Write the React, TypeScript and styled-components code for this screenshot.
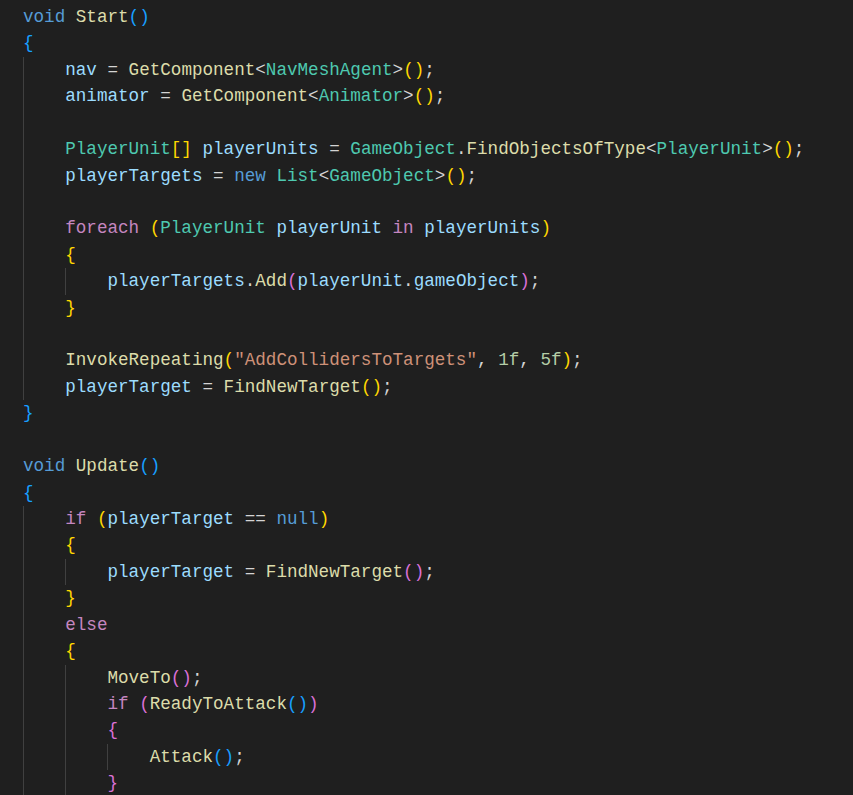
import React from "react";
import styled, { createGlobalStyle } from "styled-components";

type Kind = "k" | "c" | "t" | "v" | "f" | "s" | "n" | "p" | "b1" | "b2" | "b3";

type Token = [Kind, string];

interface CodeLine {
  depth: number;
  tokens: Token[];
}

const colors: Record<Kind, string> = {
  k: "#569cd6",
  c: "#c586c0",
  t: "#4ec9b0",
  v: "#9cdcfe",
  f: "#dcdcaa",
  s: "#ce9178",
  n: "#b5cea8",
  p: "#d4d4d4",
  b1: "#ffd700",
  b2: "#da70d6",
  b3: "#179fff",
};

const GlobalStyle = createGlobalStyle`
  html, body {
    margin: 0;
    padding: 0;
    background: #1f1f1f;
  }
`;

const Editor = styled.div`
  min-height: 100vh;
  box-sizing: border-box;
  padding: 4px 0 0 23px;
  background: #1f1f1f;
  font-family: "Liberation Mono", "DejaVu Sans Mono", monospace;
  font-size: 17.6px;
  overflow: hidden;
`;

const Row = styled.div`
  display: flex;
  height: 26.43px;
  line-height: 26.43px;
  white-space: pre;
`;

const Indent = styled.span`
  flex: none;
  width: 4ch;
  box-sizing: border-box;
  border-left: 1px solid #404040;
`;

const Tok = styled.span<{ $kind: Kind }>`
  color: ${({ $kind }) => colors[$kind]};
`;

const L = (depth: number, ...tokens: Token[]): CodeLine => ({ depth, tokens });

const lines: CodeLine[] = [
  L(0, ["k", "void"], ["p", " "], ["f", "Start"], ["b3", "()"]),
  L(0, ["b3", "{"]),
  L(1, ["v", "nav"], ["p", " = "], ["f", "GetComponent"], ["p", "<"], ["t", "NavMeshAgent"], ["p", ">"], ["b1", "()"], ["p", ";"]),
  L(1, ["v", "animator"], ["p", " = "], ["f", "GetComponent"], ["p", "<"], ["t", "Animator"], ["p", ">"], ["b1", "()"], ["p", ";"]),
  L(1),
  L(
    1,
    ["t", "PlayerUnit"],
    ["b1", "[]"],
    ["p", " "],
    ["v", "playerUnits"],
    ["p", " = "],
    ["t", "GameObject"],
    ["p", "."],
    ["f", "FindObjectsOfType"],
    ["p", "<"],
    ["t", "PlayerUnit"],
    ["p", ">"],
    ["b1", "()"],
    ["p", ";"]
  ),
  L(1, ["v", "playerTargets"], ["p", " = "], ["k", "new"], ["p", " "], ["t", "List"], ["p", "<"], ["t", "GameObject"], ["p", ">"], ["b1", "()"], ["p", ";"]),
  L(1),
  L(1, ["c", "foreach"], ["p", " "], ["b1", "("], ["t", "PlayerUnit"], ["p", " "], ["v", "playerUnit"], ["p", " "], ["c", "in"], ["p", " "], ["v", "playerUnits"], ["b1", ")"]),
  L(1, ["b1", "{"]),
  L(2, ["v", "playerTargets"], ["p", "."], ["f", "Add"], ["b2", "("], ["v", "playerUnit"], ["p", "."], ["v", "gameObject"], ["b2", ")"], ["p", ";"]),
  L(1, ["b1", "}"]),
  L(1),
  L(1, ["f", "InvokeRepeating"], ["b1", "("], ["s", "\"AddCollidersToTargets\""], ["p", ", "], ["n", "1f"], ["p", ", "], ["n", "5f"], ["b1", ")"], ["p", ";"]),
  L(1, ["v", "playerTarget"], ["p", " = "], ["f", "FindNewTarget"], ["b1", "()"], ["p", ";"]),
  L(0, ["b3", "}"]),
  L(0),
  L(0, ["k", "void"], ["p", " "], ["f", "Update"], ["b3", "()"]),
  L(0, ["b3", "{"]),
  L(1, ["c", "if"], ["p", " "], ["b1", "("], ["v", "playerTarget"], ["p", " == "], ["k", "null"], ["b1", ")"]),
  L(1, ["b1", "{"]),
  L(2, ["v", "playerTarget"], ["p", " = "], ["f", "FindNewTarget"], ["b2", "()"], ["p", ";"]),
  L(1, ["b1", "}"]),
  L(1, ["c", "else"]),
  L(1, ["b1", "{"]),
  L(2, ["f", "MoveTo"], ["b2", "()"], ["p", ";"]),
  L(2, ["c", "if"], ["p", " "], ["b2", "("], ["f", "ReadyToAttack"], ["b3", "()"], ["b2", ")"]),
  L(2, ["b2", "{"]),
  L(3, ["f", "Attack"], ["b3", "()"], ["p", ";"]),
  L(2, ["b2", "}"]),
];

const App: React.FC = () => {
  return (
    <>
      <GlobalStyle />
      <Editor>
        {lines.map((line, i) => (
          <Row key={i}>
            {Array.from({ length: line.depth }).map((_, d) => (
              <Indent key={d} />
            ))}
            {line.tokens.map(([kind, text], j) => (
              <Tok key={j} $kind={kind}>
                {text}
              </Tok>
            ))}
          </Row>
        ))}
      </Editor>
    </>
  );
};

export default App;
